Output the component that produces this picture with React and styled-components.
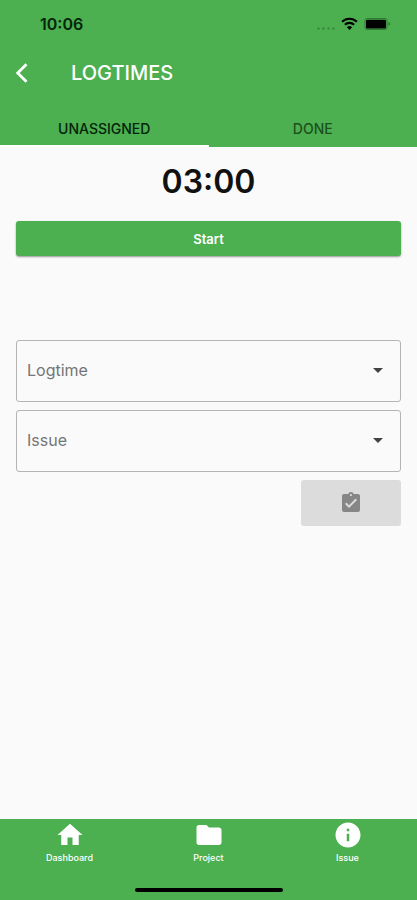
import React, { useState } from "react";
import styled, { createGlobalStyle } from "styled-components";
import {
  MdArrowDropDown,
  MdAssignmentTurnedIn,
  MdFolder,
  MdHome,
  MdInfo,
} from "react-icons/md";

const tabs = ["UNASSIGNED", "DONE"];

const links = [
  { label: "Dashboard", icon: MdHome },
  { label: "Project", icon: MdFolder },
  { label: "Issue", icon: MdInfo },
];

function StatusIcons() {
  return (
    <StatusSvg viewBox="0 0 76 16" aria-hidden="true">
      <g fill="#3a8a3e">
        <circle cx="3.500" cy="12.500" r="1.200" />
        <circle cx="8.500" cy="12.500" r="1.200" />
        <circle cx="13.500" cy="12.500" r="1.200" />
        <circle cx="18.500" cy="12.500" r="1.200" />
      </g>
      <g fill="none" stroke="#000" strokeWidth="2.2">
        <path d="M27.100 5.800a10.500 10.500 0 0 1 14.800 0" />
        <path d="M29.900 8.800a6.500 6.500 0 0 1 9.200 0" />
      </g>
      <path d="M34.500 14l-2.600-2.800a3.700 3.700 0 0 1 5.200 0z" />
      <rect
        x="50"
        y="2.5"
        width="22"
        height="11"
        rx="2"
        fill="none"
        stroke="#2f7a33"
      />
      <rect x="51" y="3.700" width="20" height="8.800" rx="1" />
      <path d="M73.500 6v4c1-.4 1.600-1.100 1.600-2s-.6-1.600-1.600-2z" fill="#2f7a33" />
    </StatusSvg>
  );
}

function SelectField({ id, label }) {
  return (
    <Field>
      <Select id={id} aria-label={label} defaultValue="">
        <option value="">{label}</option>
      </Select>
      <DropIcon />
    </Field>
  );
}

function App() {
  const [active, setActive] = useState(tabs[0]);

  return (
    <Page>
      <GlobalStyle />
      <Header>
        <StatusBar>
          <Time>10:06</Time>
          <StatusIcons />
        </StatusBar>

        <TitleBar>
          <BackButton type="button" aria-label="Back">
            <svg viewBox="0 0 22 22" width="22" height="22" aria-hidden="true">
              <path
                d="M15.500 2.200L6.700 11l8.800 8.800"
                fill="none"
                stroke="#fff"
                strokeWidth="2.800"
              />
            </svg>
          </BackButton>
          <Title>LOGTIMES</Title>
        </TitleBar>

        <Tabs role="tablist">
          {tabs.map((tab) => (
            <Tab
              key={tab}
              type="button"
              role="tab"
              aria-selected={active === tab}
              $active={active === tab}
              onClick={() => setActive(tab)}
            >
              {tab}
            </Tab>
          ))}
        </Tabs>
      </Header>

      <Main>
        <Timer>03:00</Timer>
        <StartButton type="button">Start</StartButton>

        <Form>
          <SelectField id="logtime" label="Logtime" />
          <SelectField id="issue" label="Issue" />
          <SubmitButton type="button" aria-label="Assign" disabled>
            <MdAssignmentTurnedIn />
          </SubmitButton>
        </Form>
      </Main>

      <BottomBar>
        <Nav>
          {links.map(({ label, icon: Icon }) => (
            <NavLink key={label} href="#">
              <Icon />
              {label}
            </NavLink>
          ))}
        </Nav>
        <HomeIndicator />
      </BottomBar>
    </Page>
  );
}

const GlobalStyle = createGlobalStyle`
  * {
    box-sizing: border-box;
  }

  body {
    margin: 0;
    background-color: #fafafa;
  }

  body, button, select {
    font-family: Inter, "Liberation Sans", sans-serif;
  }
`;

const Page = styled.div`
  display: flex;
  flex-direction: column;
  min-height: 100vh;
`;

const Header = styled.header`
  background-color: #4caf50;
`;

const StatusBar = styled.div`
  display: flex;
  justify-content: space-between;
  align-items: center;
  height: 48px;
  padding: 0 26px 0 40px;
`;

const Time = styled.span`
  color: #04250a;
  font-size: 16px;
  font-weight: 600;
`;

const StatusSvg = styled.svg`
  width: 76px;
  height: 16px;
`;

const TitleBar = styled.div`
  display: flex;
  align-items: center;
  gap: 24px;
  height: 50px;
  padding: 0 11px;
`;

const BackButton = styled.button`
  display: flex;
  width: 36px;
  padding: 0;
  border: none;
  background: none;
`;

const Title = styled.h1`
  margin: 0;
  color: #fff;
  font-size: 20px;
  font-weight: 500;
`;

const Tabs = styled.div`
  display: flex;
`;

const Tab = styled.button`
  flex: 1;
  height: 49px;
  padding: 14px 0 0;
  border: none;
  border-bottom: 2px solid ${({ $active }) => ($active ? "#fff" : "#4caf50")};
  background: none;
  color: ${({ $active }) => ($active ? "#04250a" : "#1b4f1e")};
  font-size: 14px;
  font-weight: 500;
`;

const Main = styled.main`
  display: flex;
  flex: 1;
  flex-direction: column;
  padding: 15px 16px;
`;

const Timer = styled.div`
  color: #111;
  font-size: 32px;
  font-weight: 600;
  line-height: 40px;
  text-align: center;
`;

const StartButton = styled.button`
  height: 35px;
  margin-top: 19px;
  border: none;
  border-radius: 3px;
  background-color: #4caf50;
  box-shadow: 0 1px 2px rgba(0, 0, 0, 0.4);
  color: #fff;
  font-size: 13px;
  font-weight: 600;
`;

const Form = styled.div`
  display: flex;
  flex-direction: column;
  gap: 8px;
  margin-top: 84px;
`;

const Field = styled.div`
  position: relative;
`;

const Select = styled.select`
  display: block;
  width: 100%;
  height: 62px;
  padding: 0 40px 2px 10px;
  border: 1px solid #b4b4b4;
  border-radius: 3px;
  appearance: none;
  background-color: transparent;
  color: #757575;
  font-size: 16px;
`;

const DropIcon = styled(MdArrowDropDown)`
  position: absolute;
  top: 18px;
  right: 11px;
  width: 24px;
  height: 24px;
  color: #424242;
  pointer-events: none;
`;

const SubmitButton = styled.button`
  display: flex;
  justify-content: center;
  align-items: center;
  align-self: flex-end;
  width: 100px;
  height: 46px;
  border: none;
  border-radius: 3px;
  background-color: #dcdcdc;
  color: #868686;
  font-size: 24px;
`;

const BottomBar = styled.footer`
  display: flex;
  flex-direction: column;
  align-items: center;
  padding-bottom: 8px;
  background-color: #4caf50;
`;

const Nav = styled.nav`
  display: flex;
  align-self: stretch;
`;

const NavLink = styled.a`
  display: flex;
  flex: 1;
  flex-direction: column;
  align-items: center;
  gap: 2px;
  height: 69px;
  padding-top: 1px;
  color: #fff;
  font-size: 9px;
  font-weight: 500;
  line-height: 12px;
  text-decoration: none;

  svg {
    width: 30px;
    height: 30px;
  }
`;

const HomeIndicator = styled.div`
  width: 148px;
  height: 4px;
  border-radius: 2px;
  background-color: #000;
`;

export default App;
